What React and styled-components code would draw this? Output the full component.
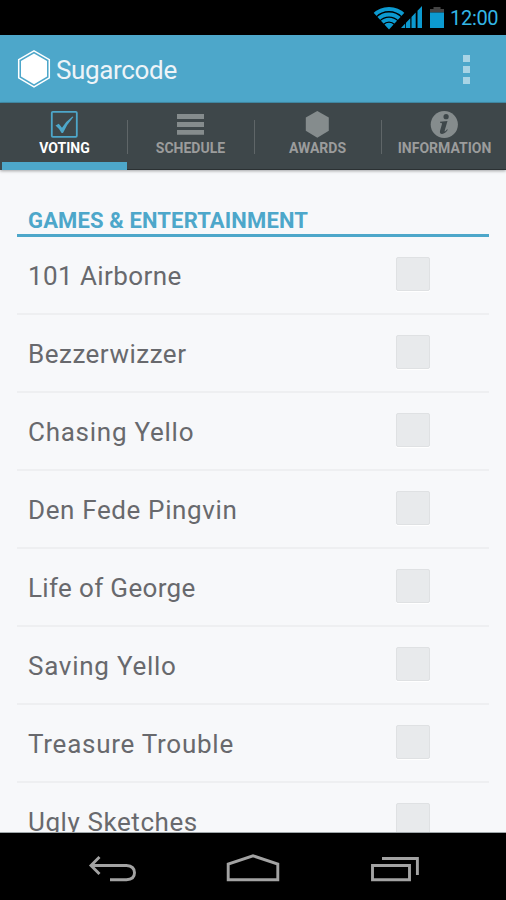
import React from "react";
import styled, { createGlobalStyle } from "styled-components";

const games = [
  { name: "101 Airborne", spacing: "0.42px" },
  { name: "Bezzerwizzer", spacing: "0.5px" },
  { name: "Chasing Yello", spacing: "0.74px" },
  { name: "Den Fede Pingvin", spacing: "0.63px" },
  { name: "Life of George", spacing: "0.34px" },
  { name: "Saving Yello", spacing: "0.74px" },
  { name: "Treasure Trouble", spacing: "0.74px" },
  { name: "Ugly Sketches", spacing: "0.58px" },
];

function StatusIcons() {
  return (
    <svg width="76" height="35" viewBox="0 0 76 35">
      <defs>
        <clipPath id="wedge">
          <path d="M19 29.5 L2 11 V0 H36 V11 Z" />
        </clipPath>
      </defs>
      <g clipPath="url(#wedge)" fill="none" stroke="#0c9ad0">
        <circle cx="19" cy="30" r="21" strokeWidth="4.2" />
        <circle cx="19" cy="30" r="15.6" strokeWidth="4" />
        <circle cx="19" cy="30" r="10.4" strokeWidth="3.7" />
        <circle cx="19" cy="30" r="3.6" strokeWidth="7.2" />
      </g>
      <path
        fill="#0c9ad0"
        d="M31 28 L35.2 23.6 V28Z M36 22.8 L40.3 18.3 V28 H36Z M41.5 17 L45.7 12.6 V28 H41.5Z M47.5 10.7 L52 6 V28 H47.5Z"
      />
      <path fill="#444" d="M60 9 H63.5 V7 H70.5 V9 H74 V12.5 H60Z" />
      <path fill="#0c9ad0" d="M60 12.5 H74 V28 H60Z" />
    </svg>
  );
}

function Logo() {
  return (
    <svg width="34" height="40" viewBox="0 0 34 40">
      <path
        d="M17 1.8 L32.3 10.6 V28.8 L17 37.8 L1.7 28.8 V10.6Z"
        fill="none"
        stroke="#fff"
        strokeWidth="1.5"
      />
      <path d="M17 4.4 L30 12 V27.4 L17 35.2 L4 27.4 V12Z" fill="#fff" />
    </svg>
  );
}

const icons = {
  voting: (
    <g fill="none" stroke="#4da7ca">
      <rect x="1.8" y="1.8" width="25" height="25" rx="1" strokeWidth="1.8" />
      <path
        d="M5.5 15.4 L8.8 13.7 L12 17.8 Q16 11 22.5 6.4 L23.4 7 Q17 14 13 23 H11.6 Q9.3 18.4 5.5 15.4Z"
        fill="#4da7ca"
        stroke="none"
      />
    </g>
  ),
  schedule: (
    <path d="M1 4 H28 V9 H1Z M1 12 H28 V17 H1Z M1 20 H28 V24.7 H1Z" />
  ),
  awards: <path d="M14.3 1 L25.8 7.5 V20.8 L14.3 27.7 L2.8 20.8 V7.5Z" />,
  information: (
    <>
      <circle cx="14.3" cy="14.5" r="13.6" />
      <g fill="#3e474a">
        <circle cx="16.1" cy="6.7" r="2.6" />
        <path d="M10 11.8 L17.5 10.9 L14.7 20.4 Q14.4 21.8 15.2 21.3 Q16 20.8 17.1 19.2 L17.8 19.8 Q15.2 24 12 23.9 Q9.2 23.7 10.1 20.4 L12 14 Q12.4 12.7 10 12.7Z" />
      </g>
    </>
  ),
};

const tabs = [
  { id: "voting", label: "Voting" },
  { id: "schedule", label: "Schedule" },
  { id: "awards", label: "Awards" },
  { id: "information", label: "Information" },
];

function App() {
  return (
    <Screen>
      <GlobalStyle />
      <StatusBar>
        <StatusIcons />
        <Clock>12:00</Clock>
      </StatusBar>
      <Header>
        <Logo />
        <Title>Sugarcode</Title>
        <MenuButton aria-label="More options">
          <i />
          <i />
          <i />
        </MenuButton>
      </Header>
      <TabBar>
        {tabs.map((tab) => (
          <Tab key={tab.id} $active={tab.id === "voting"}>
            <svg width="29" height="29" viewBox="0 0 29 29" fill="#858c8d">
              {icons[tab.id]}
            </svg>
            <TabLabel>{tab.label}</TabLabel>
          </Tab>
        ))}
      </TabBar>
      <Content>
        <SectionTitle>Games &amp; Entertainment</SectionTitle>
        <List>
          {games.map((game) => (
            <Row key={game.name} $spacing={game.spacing}>
              <span>{game.name}</span>
              <Checkbox role="checkbox" aria-checked="false" />
            </Row>
          ))}
        </List>
      </Content>
      <NavBar>
        <svg width="48" height="34" viewBox="0 0 48 34">
          <path d="M11.5 6 L3 14.5 L11.5 23 M3.5 14.5 H38.5 Q46.5 15 46.5 21.8 Q46.5 28.7 38.5 28.7 H22" />
        </svg>
        <svg width="54" height="34" viewBox="0 0 54 34">
          <path d="M2.2 28.7 V13 L27 4.8 L51.8 13 V28.7Z" />
        </svg>
        <svg width="50" height="34" viewBox="0 0 50 34">
          <path d="M2.5 14.5 H39.5 V28.7 H2.5Z M12 7.5 H47.4 V24" />
        </svg>
      </NavBar>
    </Screen>
  );
}

const GlobalStyle = createGlobalStyle`
  body {
    margin: 0;
    background: #000;
    font-family: Roboto, "Liberation Sans", sans-serif;
  }
  * {
    box-sizing: border-box;
  }
`;

const Screen = styled.div`
  display: flex;
  flex-direction: column;
  width: 506px;
  height: 900px;
  overflow: hidden;
  background: #000;
`;

const StatusBar = styled.div`
  display: flex;
  flex-shrink: 0;
  height: 35px;
  justify-content: flex-end;
  padding-right: 8px;
  color: #33b5e5;
`;

const Clock = styled.span`
  width: 48px;
  margin-left: 4px;
  font-size: 20px;
  line-height: 37px;
  white-space: nowrap;
  text-align: right;
  letter-spacing: -0.3px;
`;

const Header = styled.header`
  display: flex;
  flex: 0 0 68px;
  align-items: center;
  padding: 0 35px 0 17px;
  background: #4da7ca;
  border-bottom: 1px solid #438fac;
`;

const Title = styled.h1`
  margin: 2px 0 0 5px;
  color: #edf4f8;
  font-size: 26px;
  font-weight: 400;
  letter-spacing: -0.35px;
`;

const MenuButton = styled.button`
  display: flex;
  flex-direction: column;
  gap: 4px;
  margin: 1px 0 0 auto;
  padding: 0;
  border: 0;
  background: none;

  i {
    width: 7px;
    height: 7px;
    margin-right: 1px;
    background: #a9d4e5;
  }
`;

const TabBar = styled.nav`
  display: grid;
  flex: 0 0 67px;
  grid-template-columns: 125px 127px 127px 127px;
  padding-left: 2px;
  background: #3e474a;
  box-shadow: 0 1px 3px rgba(0, 0, 0, 0.35);
  z-index: 1;
`;

const Tab = styled.div`
  display: flex;
  flex-direction: column;
  align-items: center;
  padding-top: 7px;
  color: ${(props) => (props.$active ? "#fff" : "#9b9c9c")};
  border-bottom: ${(props) =>
    props.$active ? "8px solid #4da7ca" : "1px solid #2b3133"};

  & + & {
    background: linear-gradient(#5f6668, #5f6668) 0 17px / 1px 34px no-repeat;
  }
`;

const TabLabel = styled.span`
  margin-top: 1px;
  font-size: 14px;
  font-weight: 700;
  line-height: 17px;
  text-transform: uppercase;
`;

const Content = styled.main`
  flex: 1;
  min-height: 0;
  padding: 34px 17px 0;
  overflow: hidden;
  background: #f7f8fa;
  border-bottom: 1px solid #9fa6a9;
`;

const SectionTitle = styled.h2`
  height: 33px;
  margin: 0;
  padding-left: 11px;
  border-bottom: 3px solid #4da7ca;
  color: #4da7ca;
  font-size: 22px;
  font-weight: 700;
  line-height: 33px;
  text-transform: uppercase;
  letter-spacing: 0.14px;
`;

const List = styled.ul`
  margin: 0;
  padding: 0;
  list-style: none;
`;

const Row = styled.li`
  display: flex;
  justify-content: space-between;
  height: 78px;
  padding: 20px 59px 0 11px;
  border-bottom: 2px solid #eeeff1;
  color: #68696d;
  font-size: 26px;
  line-height: 38px;
  letter-spacing: ${(props) => props.$spacing};
`;

const Checkbox = styled.div`
  width: 34px;
  height: 34px;
  border: 1px solid #dfe1e3;
  border-radius: 2px;
  background: #e8eaec;
  box-shadow: 0 1px 0 #fff;
`;

const NavBar = styled.nav`
  display: flex;
  flex: 0 0 67px;
  justify-content: space-between;
  padding: 18px 86px 0 88px;

  svg {
    fill: none;
    stroke: #a3a3a3;
    stroke-width: 2.9;
  }
`;

export default App;
